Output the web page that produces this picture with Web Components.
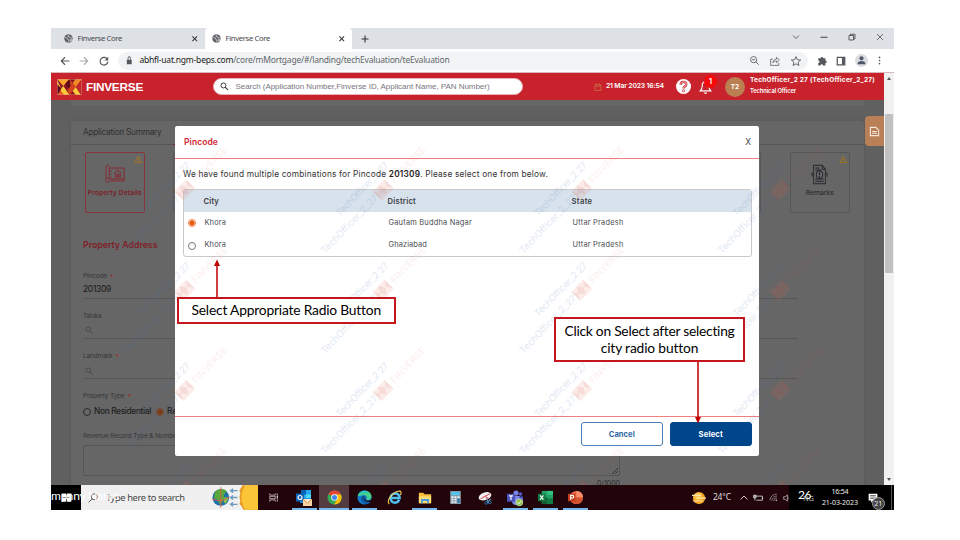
<!DOCTYPE html>
<html lang="en">
<head>
<meta charset="utf-8">
<title>Finverse Core</title>
<style>
body{margin:0;width:960px;height:540px;overflow:hidden;background:#fff;font-family:Inter,"Liberation Sans",sans-serif}
</style>
</head>
<body>
<slide-page></slide-page>
<script>
const G = {
  globe:`<circle cx="8" cy="8" r="7.500" fill="#5f6368"/><path d="M2 6l4 1 1 3 2 1-1 4M8 1.500l-1 2.500 3 1 1 2 4 0M11 10l3 0-2 3z" stroke="#dfe1e4" stroke-width="1.300" fill="none"/>`,
  x:`<path d="M3 3l10 10M13 3l-10 10" stroke="currentColor" stroke-width="2.200"/>`,
  xt:`<path d="M2 2l12 12M14 2l-12 12" stroke="currentColor" stroke-width="1.500"/>`,
  plus:`<path d="M8 1v14M1 8h14" stroke="currentColor" stroke-width="2.200"/>`,
  chev:`<path d="M2 5l6 6 6-6" stroke="currentColor" stroke-width="1.600" fill="none"/>`,
  up:`<path d="M1 11l7-7 7 7" stroke="currentColor" stroke-width="1.800" fill="none"/>`,
  min:`<path d="M1 8.500h14" stroke="currentColor" stroke-width="2"/>`,
  max:`<path d="M2 5h9v9H2zM4.500 5V2.500H14V12h-3" stroke="currentColor" stroke-width="1.700" fill="none"/>`,
  back:`<path d="M15 8H2M8 2L2 8l6 6" stroke="currentColor" stroke-width="1.800" fill="none"/>`,
  fwd:`<path d="M1 8h13M8 2l6 6-6 6" stroke="currentColor" stroke-width="1.800" fill="none"/>`,
  reload:`<path d="M13.500 5.500A6.200 6.200 0 1 0 14.200 9" stroke="currentColor" stroke-width="1.900" fill="none"/><path d="M14.800 1v6H9z" fill="currentColor"/>`,
  lock:`<path d="M2 7h12v8.500H2z" fill="currentColor"/><path d="M5 7V4.500a3 3 0 0 1 6 0V7" stroke="currentColor" stroke-width="2" fill="none"/>`,
  mag:`<circle cx="6.500" cy="6.500" r="4.700" stroke="currentColor" stroke-width="1.800" fill="none"/><path d="M10 10l5 5" stroke="currentColor" stroke-width="2"/>`,
  magL:`<circle cx="10" cy="6" r="4.800" stroke="currentColor" stroke-width="1.300" fill="none"/><path d="M6.500 9.500L1 15" stroke="currentColor" stroke-width="1.400"/>`,
  zoomout:`<circle cx="6.500" cy="6.500" r="5.500" stroke="currentColor" stroke-width="1.500" fill="none"/><path d="M10.500 10.500l5 5M4 6.500h5" stroke="currentColor" stroke-width="1.600"/>`,
  share:`<path d="M5 5H1v10h13V11M4.500 11c.5-4 3-6 6-6V2l4.500 4.500-4.500 4.200V8c-3 0-4.500 1-6 3z" stroke="currentColor" stroke-width="1.200" fill="none"/>`,
  star:`<path d="M8 1l2.100 5 5.400.4-4.100 3.500 1.300 5.300L8 12.400l-4.700 2.800 1.300-5.300L.5 6.400l5.400-.4z" stroke="currentColor" stroke-width="1.400" fill="none"/>`,
  ext:`<path d="M6 3.500a2 2 0 0 1 4 0h3.500v3.800a2 2 0 0 1 0 4V15h-4a2 2 0 0 0-4 0H2v-3.700a2 2 0 0 0 0-4V3.500z" fill="currentColor"/>`,
  panel:`<path d="M2 2h12v12H2z" stroke="currentColor" stroke-width="2" fill="none"/><path d="M9.500 2H14v12H9.500z" fill="currentColor"/>`,
  person:`<circle cx="8" cy="8" r="8" fill="#dadce0"/><circle cx="8" cy="5.200" r="2.500" fill="#4a5568"/><path d="M3 12.500c0-5 10-5 10 0z" fill="#4a5568"/>`,
  dots:`<circle cx="8" cy="2.500" r="1.500" fill="currentColor"/><circle cx="8" cy="8" r="1.500" fill="currentColor"/><circle cx="8" cy="13.500" r="1.500" fill="currentColor"/>`,
  cal:`<path d="M2 3.500h12V15H2zM2 6.500h12M5 1v3M11 1v3" stroke="#c97343" stroke-width="1.500" fill="none"/>`,
  help:`<circle cx="8" cy="8" r="8" fill="#fff"/><path d="M5 6.300C5 2 11.300 2.200 11 6c-.2 2-3 2-3 4" stroke="#c8232c" stroke-width="2.400" fill="none"/><path d="M5 6.300C5 2 11.300 2.200 11 6c-.2 2-3 2-3 4" stroke="#fff" stroke-width=".8" fill="none"/><circle cx="8" cy="12.600" r="1.300" stroke="#c8232c" stroke-width=".8" fill="#fff"/>`,
  bell:`<path d="M8 2c-3 0-4 2-4 4.500C4 10 3 11 1.500 12.500h13C13 11 12 10 12 6.500 12 4 11 2 8 2zM6.300 14.500c1 1 2.400 1 3.400 0" stroke="#fff" stroke-width="1.300" fill="none"/>`,
  note:`<path d="M2 2h8l4 4v8H2z" stroke="#f2e5db" stroke-width="1.600" fill="none"/><path d="M4.500 8h7M4.500 10.500h7" stroke="#f2e5db" stroke-width="1.500"/>`,
  warn:`<path d="M8 2l6.800 12H1.200z" stroke="#a8791b" stroke-width="1.500" fill="none"/><path d="M8 6v4.500M8 11.500v1.500" stroke="#a8791b" stroke-width="1.600"/>`,
  plot:`<path d="M4 3.200h11.300v8.700H4M4 3v8M1.500 11V2.200C1.500.5 4 .5 4 2.200M1.500 11v2.400c0 1.800 2.300 1.800 2.500.1h11.300v-1.600M1.500 11.500H4M8 7.200l2.500-2.500L13 7.200M8.700 6.700v3.600h3.700V6.700M10 10.300V8h1.200v2.300M5.500 5v1M5.500 7.500v1M5.500 10v1" stroke="#872530" stroke-width=".75" fill="none"/>`,
  remark:`<path d="M2.500 1h8L13.500 4v11h-11zM10.500 1v3h3M4 3h4M4 4.500h5M4 11.500h8M4 13.200h8" stroke="#26262b" stroke-width=".8" fill="none"/><circle cx="8" cy="8" r="3" stroke="#26262b" stroke-width=".9" fill="#666"/><path d="M8 6v2.500M8 9.200v.8M1 6.500v3M15 6.500v3" stroke="#26262b" stroke-width="1"/>`,
  win:`<path d="M1 2h6.500v5.600H1zM8.500 2H15v5.600H8.500zM1 8.500h6.500V14H1zM8.500 8.500H15V14H8.500z" fill="#fff"/>`,
  task:`<path d="M2.500 2v2.500h8V2M2.500 14v-2.500h8V14M2.500 6.300h8v3.400h-8zM13.500 2v12" stroke="#d8cfd1" stroke-width="1.100" fill="none"/><path d="M12.700 6h1.600v2h-1.600z" fill="#fff"/>`,
  outlook:`<path d="M5 0h10v9H5z" fill="#28a8ea"/><path d="M5 0h5v4.500H5z" fill="#0364b8"/><path d="M10 4.500h5V9h-5z" fill="#50d9ff"/><path d="M4 8h11v5H4z" fill="#1490df"/><rect y="3.500" width="8" height="8" fill="#0f64b5"/><circle cx="4" cy="7.500" r="2" stroke="#fff" stroke-width="1.200" fill="none"/><path d="M7 9h9v7H7z" fill="#f8d5a0"/><path d="M7 9l4.500 4L16 9" stroke="#d28a3f" stroke-width="1" fill="#fff0d5"/>`,
  chrome:`<circle cx="8" cy="8" r="7.500" fill="#34a853"/><path d="M8 8L1.500 4.200A7.500 7.500 0 0 1 14.800 4.700L8 4.700z" fill="#ea4335"/><path d="M8 4.700h6.800A7.500 7.500 0 0 1 7.600 15.500L11 9.500z" fill="#fbbc05"/><circle cx="8" cy="8" r="3.500" fill="#fff"/><circle cx="8" cy="8" r="2.700" fill="#4285f4"/>`,
  edge:`<circle cx="8" cy="8" r="7.500" fill="#127dcc"/><path d="M.8 6C3-1.500 15-1 15.500 7c0 3-3 4.500-5.500 3.500 2-2.500-.5-5.500-4-5C4 5.500 2 7 .8 6z" fill="#44cf8b"/><path d="M1 5.500C4-.5 11 0 12 3.500 8 2 3 3 1 5.500z" fill="#2bc3d2"/><path d="M6 7c-3 3 0 7 4 7.500 2.500 0 4.500-1.500 5.200-4C12 12.500 7.500 11 8 7z" fill="#22050a"/><path d="M6 7c-3 3 0 7.500 4 8 2 0 3.500-1 4.500-2.500-4 1-7.500-1.500-7-5z" fill="#0b57a6"/>`,
  ie:`<path d="M13 10.500C11 15 4 14.500 3.800 8.500 4 2.500 13 2 13.500 8.500H5" stroke="#4ec0ef" stroke-width="2.600" fill="none"/><path d="M2.500 15C-1 12 5 3 12 1.300c3.500-.7 3.500 2 2.300 4" stroke="#f3cf57" stroke-width="1.200" fill="none"/>`,
  folder:`<path d="M1 2h5l1.500 1.700H15V14H1z" fill="#f7bf3a"/><path d="M1 6h14v8H1z" fill="#ffdc73"/><path d="M3.500 14V9h9v5h-2v-2.500h-5V14z" fill="#4a9be0"/>`,
  calc:`<rect x="1.500" y="0" width="13" height="16" fill="#8a9cab"/><path d="M3 1.500h10V5H3z" fill="#48c8f4"/><path d="M3 6.500h2.500v2H3zM6.700 6.500h2.500v2H6.700zM3 9.500h2.500v2H3zM6.700 9.500h2.500v2H6.700zM3 12.500h2.500v2H3zM6.700 12.500h2.500v2H6.700zM10.500 6.500H13v2h-2.500z" fill="#f2f6f9"/><path d="M10.500 9.500H13v5h-2.500z" fill="#1b76b8"/>`,
  snip:`<ellipse cx="8" cy="6" rx="7.500" ry="4.300" transform="rotate(-20 8 6)" fill="#f2f2f2"/><path d="M8 6L14 3M8 6l-5 3M8 6l4 2.500" stroke="#d4535c" stroke-width="1.200"/><path d="M9.500 8l3 6M15 9l-5 4" stroke="#7893a8" stroke-width="1.200"/><circle cx="9.500" cy="13.500" r="1.600" stroke="#287bc0" fill="none"/><circle cx="13.500" cy="13" r="1.600" stroke="#287bc0" fill="none"/>`,
  teams:`<circle cx="9" cy="3" r="2.600" fill="#7b83eb"/><circle cx="13.500" cy="4" r="1.800" fill="#5059c9"/><path d="M5 6h8v5a4 4 0 0 1-8 0z" fill="#7b83eb"/><path d="M12 6.500h4v4a3 3 0 0 1-4 2z" fill="#5059c9"/><rect y="3.800" width="8" height="8" rx=".5" fill="#4b53bc"/><path d="M2 5.800h4M4 5.800V10" stroke="#fff" stroke-width="1.200"/><circle cx="12.300" cy="12.300" r="3.600" fill="#92c353" stroke="#fff" stroke-width=".4"/><path d="M10.500 12.300l1.400 1.400 2.300-2.600" stroke="#fff" fill="none"/>`,
  excel:`<path d="M4 1h12v14H4z" fill="#21a366"/><path d="M4 8h6v7H4z" fill="#185c37"/><path d="M10 1h6v4h-6z" fill="#33c481"/><path d="M10 9h6v6h-6z" fill="#107c41"/><rect y="4" width="8" height="8" fill="#107c41"/><path d="M2.200 5.800l3.600 4.400M5.800 5.800l-3.600 4.400" stroke="#fff" stroke-width="1.200"/>`,
  ppt:`<circle cx="9" cy="8" r="7" fill="#ed6c47"/><path d="M9 1a7 7 0 0 1 7 7H9z" fill="#ff8f6b"/><path d="M2 8h14a7 7 0 0 1-14 0z" fill="#d35230"/><rect y="4" width="8" height="8" fill="#c43e1c"/><path d="M2.800 10.500V5.700h1.800c2 0 2 2.800 0 2.800H2.800" stroke="#fff" stroke-width="1.200" fill="none"/>`,
  sun:`<circle cx="8" cy="8" r="7" fill="#f9a826"/><circle cx="7" cy="6" r="4" fill="#fdc94a"/><path d="M0 5h10M5 8.200h11M1 11.400h11" stroke="#fbe7b2" stroke-width="1.300"/>`,
  batt:`<path d="M5 5h10v6.500H5.500M15.500 7v2.500" stroke="#ddd" stroke-width="1.300" fill="none"/><path d="M1 3.500h4v4H1zM3 8v4" stroke="#ddd" stroke-width="1.300" fill="#999"/>`,
  wifi:`<path d="M1.500 13A12 12 0 0 1 14 2M5 13.500a8.500 8.500 0 0 1 9-8M8.500 14A5 5 0 0 1 14 9" stroke="#aaa" stroke-width="1.200" fill="none"/><circle cx="13" cy="13" r="1.300" fill="#ddd"/>`,
  spk:`<path d="M1 6h2.500L7 3v10l-3.500-3H1zM9 6c1 1 1 3 0 4M11 4.500c2 2 2 5 0 7M13 3c3 3 3 7 0 10" stroke="#ccc" stroke-width="1.100" fill="none"/>`,
  chat:`<path d="M1 1h14v11H8l-3 3.500V12H1z" fill="#fff"/><path d="M3.500 4h9M3.500 6.500h9M3.500 9h6" stroke="#222" stroke-width="1"/>`
};
class UiIcon extends HTMLElement{
  connectedCallback(){
    if(this.shadowRoot)return;
    const w=this.getAttribute('w')||10,h=this.getAttribute('h')||w;
    this.attachShadow({mode:'open'}).innerHTML=`<style>:host{display:block;flex:none;width:${w}px;height:${h}px}svg{display:block;overflow:visible}</style><svg width="${w}" height="${h}" viewBox="0 0 16 16" ${w!==h?'preserveAspectRatio="none"':''}>${G[this.getAttribute('name')]}</svg>`;
  }
}
/* Single line of text, tracked so that it fills the width given in "w". */
class FitText extends HTMLElement{
  connectedCallback(){
    if(this.shadowRoot)return;
    this.attachShadow({mode:'open'}).innerHTML=`<style>:host{display:inline-block;flex:none;width:max-content;white-space:nowrap;line-height:1.200}</style><slot></slot>`;
    const w=+this.getAttribute('w');
    if(w){const n=this.getBoundingClientRect().width;this.style.letterSpacing=((w-n)/this.textContent.length)+'px'}
  }
}
function comp(name,html){
  customElements.define(name,class extends HTMLElement{
    connectedCallback(){
      if(this.shadowRoot)return;
      this.attachShadow({mode:'open'}).innerHTML=typeof html==='function'?html(this):html;
    }
  });
}
customElements.define('ui-icon',UiIcon);

comp('finverse-logo',`<style>:host{display:block;flex:none;width:25px;height:16px}svg{display:block}</style>
<svg width="25" height="16" viewBox="0 0 24 16"  preserveAspectRatio="none"><path fill="#8d1420" d="M0 0h24v16H0z"/><path fill="#f7a52c" d="M0 0l6 7 6-7z"/><path fill="#e2571f" d="M0 16l6-8 6 8z"/><path fill="#f9c93a" d="M6 7l6 9H7L3 11zM0 1v4l4 4z"/><path fill="#5e0b17" d="M0 6l4 4-4 6zM8 5l4-5 4 5-4 6z"/><path fill="#d3431f" d="M12 0l6 8-6 8-2-5 3-4z"/><path fill="#f08a24" d="M24 0l-6 8-3-4 3-4z"/><path fill="#c4262a" d="M18 8l6-8v16z"/><path fill="#f9c93a" d="M18 8l5 8h-5l-3-4z"/><path d="M.3.300h23.400v15.400H.3z" fill="none" stroke="#d98b7d" stroke-width=".6"/></svg>`);

comp('browser-tab',`<style>:host{display:flex;align-items:center;box-sizing:border-box;width:147px;height:21px;padding:0 6px 0 7px;color:#45494d;font:7.700px "Noto Sans",sans-serif;border-radius:4px 4px 0 0}:host([active]){background:#fff}
fit-text{margin:0 auto 0 5px}ui-icon[name=x]{color:#333}</style><ui-icon name="globe" w="9"></ui-icon><fit-text w="44.500">Finverse Core</fit-text><ui-icon name="x" w="7.500"></ui-icon>`);

comp('browser-chrome',`<style>:host{display:block;color:#54585d}
.tabs{display:flex;background:#dee1e6;height:21px;align-items:center}
.tabs .one{width:148px;margin-left:5.500px}.win{margin-left:auto;display:flex;gap:20px;align-items:center;padding-right:10px;color:#444;height:18px;margin-bottom:3px}
.bar{display:flex;height:24px;align-items:center;background:#fff;border-bottom:1px solid #d9b9bb;box-sizing:border-box;padding-left:9px}
.url{display:flex;align-items:center;height:18px;width:690px;box-sizing:border-box;border-radius:9px;background:#f1f3f4;margin-left:9px;padding:0 7px 0 8px;font:8.500px "Noto Sans",sans-serif}
.url fit-text{margin:0 auto 0 7px;color:#63676c}.url b{font-weight:400;color:#222}.r{display:flex;gap:11px}
.ex{display:flex;gap:9px;align-items:center;margin-left:9px}</style>
<div class="tabs"><browser-tab class="one"></browser-tab><browser-tab active></browser-tab><ui-icon name="plus" w="8" style="margin-left:9px;color:#333"></ui-icon>
<div class="win"><ui-icon name="chev" w="8"></ui-icon><ui-icon name="min" w="8"></ui-icon><ui-icon name="max" w="8"></ui-icon><ui-icon name="xt" w="8"></ui-icon></div></div>
<div class="bar"><ui-icon name="back" w="10"></ui-icon><ui-icon name="fwd" w="10" style="margin-left:9px;color:#aaa"></ui-icon><ui-icon name="reload" w="10" style="margin-left:10px"></ui-icon>
<div class="url"><ui-icon name="lock" w="6.500" h="8.500"></ui-icon><fit-text w="310"><b>abhfl-uat.ngm-beps.com</b>/core/mMortgage/#/landing/techEvaluation/teEvaluation</fit-text><div class="r"><ui-icon name="zoomout" w="9"></ui-icon><ui-icon name="share" w="10"></ui-icon><ui-icon name="star" w="10"></ui-icon></div></div>
<div class="ex"><ui-icon name="ext" w="10"></ui-icon><ui-icon name="panel" w="10"></ui-icon><ui-icon name="person" w="13"></ui-icon><ui-icon name="dots" w="9" style="margin-left:-2px"></ui-icon></div></div>`);

comp('app-header',`<style>:host{display:flex;align-items:center;height:27px;background:#c8232c;color:#fff;padding-left:6px;box-sizing:border-box}
.brand{font:700 11.800px "Liberation Sans",sans-serif;margin-left:4px}
.search{display:flex;align-items:center;width:310px;height:16.500px;box-sizing:border-box;background:#fff;border:1px solid #e8b5b8;border-radius:9px;margin-left:70px;padding-left:6px;color:#333;font:8px "Liberation Sans",sans-serif}
.search fit-text{margin-left:7px;color:#77777c}
.date{font-weight:600;font-size:6.800px;margin-left:4px}
.bell{position:relative;margin-left:8px}.bell i{position:absolute;left:5px;top:-5px;width:13px;height:13px;border-radius:50%;background:#f50909;font:700 7px/13px Inter,sans-serif;text-align:center}
.av{width:20px;height:20px;border-radius:50%;background:#ba8052;margin-left:13px;font-size:6.500px;font-weight:700;line-height:20px;text-align:center;flex:none}
.who{display:flex;flex-direction:column;align-items:flex-start;gap:3px;margin:0 0 1px 5px;font-weight:700;font-size:6.500px}.who .s{font-weight:600;font-size:5.800px}</style>
<finverse-logo></finverse-logo><fit-text class="brand" w="57">FINVERSE</fit-text>
<div class="search"><ui-icon name="mag" w="8.500"></ui-icon><fit-text w="254">Search (Application Number,Finverse ID, Applicant Name, PAN Number)</fit-text></div>
<ui-icon name="cal" w="8" style="margin-left:71px"></ui-icon><fit-text class="date" w="58">21 Mar 2023 16:54</fit-text>
<ui-icon name="help" w="15" style="margin-left:12px"></ui-icon><div class="bell"><ui-icon name="bell" w="13" h="14"></ui-icon><i>1</i></div>
<div class="av">T2</div><div class="who"><fit-text w="125">TechOfficer_2 27 (TechOfficer_2_27)</fit-text><fit-text class="s" w="46">Technical Officer</fit-text></div>`);

comp('nav-tile',`<style>:host{display:flex;flex-direction:column;align-items:center;box-sizing:border-box;width:59.500px;height:60.500px;border:1px solid #565656;border-radius:2px;padding-top:2px;font-size:6.600px;font-weight:500;color:#2c2c30}
:host([on]){border-color:#88343b;color:#7c1d27;font-weight:600}.w{align-self:flex-end;margin-right:1px;height:8.500px}.i{height:21px;margin-bottom:5px}</style><div class="w"><slot name="warn"></slot></div><div class="i"><slot name="icon"></slot></div><slot></slot>`);

comp('form-field',e=>`<style>:host{display:block;height:40.300px;box-sizing:border-box;font-size:6.600px;color:#363638}
.l{height:10px;display:flex;align-items:center;gap:3px}.l em{color:#9c2525;font-style:normal}.v{display:flex;align-items:center;height:16px;border-bottom:1px solid #565656;font-size:8.300px;font-weight:500;color:#1f1f22;padding-top:1px;box-sizing:border-box;height:17px}ui-icon{color:#4a4a4a;margin-left:2px}</style>
<div class="l"><fit-text w="${e.getAttribute('lw')}">${e.getAttribute('label')}</fit-text>${e.hasAttribute('req')?'<em>*</em>':''}</div><div class="v">${e.hasAttribute('search')?'<ui-icon name="mag" w="8"></ui-icon>':''}<slot></slot></div>`);

comp('form-page',`<style>:host{display:block;height:385px;overflow:hidden;background:#606060;padding:0 20px;box-sizing:border-box}
.prev{height:6px;background:#666}.card{height:370px;margin-top:15px;background:#666;border-radius:4px 4px 0 0;box-shadow:0 0 3px #555}
.tabs{position:relative;display:flex;height:24px;box-sizing:border-box;padding-top:1px;align-items:center;border-bottom:1px solid #555;padding-left:12px;font-size:8.300px;color:#303033}.tabs i{position:absolute;left:102px;bottom:-1px;width:60px;height:1px;background:#8c1f29}
.tiles{display:grid;grid-template-columns:59.500px 500px 59.500px 59.500px;column-gap:28.700px;padding:7px 0 0 14px}
h3{margin:25.500px 0 0 12px;height:14px;font-size:8.800px;font-weight:600;color:#811d27;display:flex;align-items:center}
.f{padding:19.500px 66px 0 12px}
.pt{display:flex;gap:3px;align-items:center;font-size:8.300px;font-weight:500;color:#1e1e20;height:14px;margin-top:2.500px}
.lab{height:10px;display:flex;align-items:center;gap:3px;font-size:6.600px;color:#363638}.lab em{color:#9c2525;font-style:normal}
.rad{width:8px;height:8px;box-sizing:border-box;border:1px solid #2a2a2a;border-radius:50%;background:#666}.rad.on{border-color:#7b4423;background:radial-gradient(#7b3b17 0 2.300px,#666 2.900px);margin-left:2px}
.ta{display:flex;align-items:flex-end;justify-content:flex-end;width:537px;height:31px;box-sizing:border-box;border:1px solid #555;border-radius:2px;margin-top:3px}
.cnt{width:537px;text-align:right;font-size:7px;line-height:9px;margin-top:3.500px;color:#2a2a2a}</style>
<div class="prev"></div><div class="card"><div class="tabs"><fit-text w="78.500">Application Summary</fit-text><i></i></div>
<div class="tiles"><nav-tile on><ui-icon slot="warn" name="warn" w="8.500"></ui-icon><ui-icon slot="icon" name="plot" w="21" h="20"></ui-icon><fit-text w="54">Property Details</fit-text></nav-tile><nav-tile></nav-tile><nav-tile></nav-tile><nav-tile><ui-icon slot="warn" name="warn" w="8.500"></ui-icon><ui-icon slot="icon" name="remark" w="17" h="21"></ui-icon><fit-text w="28">Remarks</fit-text></nav-tile></div>
<h3><fit-text w="74.500">Property Address</fit-text></h3>
<div class="f"><form-field label="Pincode" lw="24" req><fit-text w="28">201309</fit-text></form-field><form-field label="Taluka" lw="18.500" search></form-field><form-field label="Landmark" lw="29.500" req search></form-field>
<div class="lab"><fit-text w="41.500">Property Type</fit-text><em>*</em></div><div class="pt"><span class="rad"></span><fit-text w="57">Non Residential</fit-text><span class="rad on"></span><fit-text w="45">Residential</fit-text></div>
<div class="lab" style="margin-top:13px"><fit-text w="96">Revenue Record Type &amp; Number</fit-text></div>
<div class="ta"><svg width="8" height="8"><path d="M1 7l6-6M4 7l3-3" stroke="#333"/></svg></div><div class="cnt">0/1000</div></div></div>`);

comp('water-marks',()=>{
  let s='';
  for(let r=0;r<4;r++)for(let c=0;c<4;c++){
    const x=133+c*198.500,y=90+r*100.300;
    s+=`<g transform="translate(${x} ${y}) rotate(-46)"><text x="-86" y="3" textLength="77" class="b">TechOfficer_2_27</text><text x="-49" y="-12" textLength="71" class="b">TechOfficer_2 27</text><path d="M-8-6H9V7H-8z" fill="#e8735a" opacity=".13"/><path d="M-8-6l4 6-4 6zM0-6l4 6-4 6-4-6zM9-6L5 0l4 6z" fill="#c0392b" opacity=".09"/><text x="13" y="4" textLength="46" class="r">FINVERSE</text></g>`;
  }
  return `<style>:host{display:block;position:absolute;inset:0;overflow:hidden;pointer-events:none}text{font:9.500px Inter,sans-serif}.b{fill:#4472b8;opacity:.16}.r{fill:#dd4444;opacity:.09}</style><svg width="833" height="385">${s}</svg>`;
});

comp('radio-dot',`<style>:host{display:block;box-sizing:border-box;width:8px;height:8px;border:1px solid #777;border-radius:50%;margin-left:4px}:host([on]){border-color:#ef7a3c;background:radial-gradient(circle,#e8590c 0 2.300px,#fff 2.900px)}</style>`);

comp('city-table',`<style>:host{display:block;border:1px solid #c9c9cb;border-radius:3px;overflow:hidden;height:68px;box-sizing:border-box;font-size:7.400px;color:#4a4b50}
.row{display:grid;grid-template-columns:20.500px 184px 184px 1fr;height:22.300px;align-items:center}.row.h{background:#d8e2ec;font-weight:600;color:#3c4046;font-size:7.600px}.h fit-text{margin-left:-1px}</style>
<div class="row h"><span></span><fit-text w="15.500">City</fit-text><fit-text w="28.500">District</fit-text><fit-text w="21">State</fit-text></div>
<div class="row"><radio-dot on></radio-dot><fit-text w="21.500">Khora</fit-text><fit-text w="83.500">Gautam Buddha Nagar</fit-text><fit-text w="51">Uttar Pradesh</fit-text></div>
<div class="row"><radio-dot></radio-dot><fit-text w="21.500">Khora</fit-text><fit-text w="38.500">Ghaziabad</fit-text><fit-text w="51">Uttar Pradesh</fit-text></div>`);

comp('ui-button',`<style>:host{display:flex;align-items:center;justify-content:center;box-sizing:border-box;width:81.500px;height:23.500px;border:1px solid #4c7fb5;border-radius:3px;background:#fff;color:#2f66a2;font-size:7.600px;font-weight:700;padding-top:1px}:host([primary]){background:#00468b;border-color:#00468b;color:#fff}</style><slot></slot>`);

comp('pincode-dialog',`<style>:host{display:flex;flex-direction:column;position:absolute;left:124px;top:25.500px;width:584px;height:330.500px;background:#fff;border-radius:2px;box-sizing:border-box}
.hd{display:flex;justify-content:space-between;align-items:center;height:33.500px;box-sizing:border-box;border-bottom:1px solid #ee7f83;padding:0 8px 0 9px;color:#cf2733;font-size:8.500px;font-weight:600}.hd span{color:#444;font:8.500px Inter,sans-serif}
.bd{flex:1;padding:11px 7px 0 8px;color:#333;font-size:8.300px}.msg{height:19px;display:flex;align-items:flex-start}
.ft{height:40px;box-sizing:border-box;border-top:1px solid #ee7f83}</style>
<div class="hd"><fit-text w="34">Pincode</fit-text><span>X</span></div>
<div class="bd"><div class="msg"><fit-text w="365">We have found multiple combinations for Pincode <b style="font-weight:600;color:#222">201309</b>. Please select one from below.</fit-text></div><city-table></city-table></div><div class="ft"></div>`);

comp('scroll-bar',`<style>:host{display:flex;flex-direction:column;justify-content:space-between;width:10px;height:412px;background:#f1f1f1;align-items:center}
i{border:2.500px solid transparent}.u{border-bottom:3px solid #555;margin-top:2px}.d{border-top:3px solid #555;margin-bottom:2px}.t{width:8px;height:159px;background:#c1c1c1;margin-top:33.500px;margin-bottom:auto}</style><i class="u"></i><div class="t"></div><i class="d"></i>`);

const apps=[['outlook',16,1],['chrome',15,2],['edge',15,1],['ie',15,0],['folder',14,1],['calc',13,0],['snip',14,0],['teams',16,1],['excel',15,1],['ppt',15,1]];
comp('task-bar',`<style>:host{display:flex;height:25px;background:#22050a;color:#fff;font-family:"Noto Sans",sans-serif;overflow:hidden}
.st{width:30px;background:#000;display:flex;align-items:center;justify-content:center}
.se{width:177px;background:#f0f0f0;display:flex;align-items:center;color:#444;font-size:9.300px}.se ui-icon{margin-left:7px}.se fit-text{margin:0 8px 0 8px}
.tv{width:31px;display:flex;align-items:center;justify-content:center}
.app{width:30.200px;display:flex;align-items:center;justify-content:center;box-sizing:border-box;background:linear-gradient(#76b9ed,#76b9ed) center bottom/0 2px no-repeat}.r1{background-size:25px 2px}.r2{background-size:30px 2px;background-color:#543b40}
.sun{margin-left:101px;display:flex;align-items:center;font-size:8.500px;gap:7px;color:#ddd}
.tr{display:flex;align-items:center;gap:5.500px;margin-left:9px;color:#ddd}
.cl{background:#000;flex:1;display:flex;align-items:center;color:#eee;font-size:7px;margin-left:-4px}
.cl .k{display:flex;flex-direction:column;align-items:center;gap:3px;margin-left:32.500px}
.n{position:relative;margin-left:10px}.n i{position:absolute;left:4px;top:4px;width:11px;height:11px;border-radius:50%;background:#444;font:7px/11px "Noto Sans",sans-serif;text-align:center;border:.5px solid #999}.e{margin-left:auto;margin-right:2px;width:1px;height:25px;background:#555}</style>
<div class="st"><ui-icon name="win" w="11"></ui-icon></div>
<div class="se"><ui-icon name="magL" w="10"></ui-icon><fit-text w="78.500">Type here to search</fit-text>
<svg width="47" height="25" viewBox="0 0 47 25" style="margin-left:19.500px"><circle cx="9" cy="12.500" r="8.500" fill="#1f6fa8"/><path d="M3 7c3-4 9-4 12-1l-3 4 1 4-5 6-2-5-4-2z" fill="#58a83c"/><path d="M13 12l4 1-3 6-2-2z" fill="#8cc24a"/><path d="M9 2v21M0 14q9 4 18-2" stroke="#d95f4f" fill="none"/><path d="M19 5.500h7M19 12.500h7M19 19.500h7M21.500 3.500l-2.500 2 2.500 2M21.500 10.500l-2.500 2 2.500 2M21.500 17.500l-2.500 2 2.500 2" stroke="#6d9cc0" stroke-width="1.400" fill="none"/><path d="M47 0H31q-1 3-3 5l1 3-1 4 1 4-1 3q3 3 4 6h15z" fill="#e79a22"/><path d="M47 0H34Q26 12 34 25h13z" fill="#fac536"/></svg></div>
<div class="tv"><ui-icon name="task" w="11"></ui-icon></div>
${apps.map(a=>`<div class="app r${a[2]}"><ui-icon name="${a[0]}" w="${a[1]}"></ui-icon></div>`).join('')}
<div class="sun"><ui-icon name="sun" w="14"></ui-icon><fit-text w="18">24°C</fit-text></div>
<div class="tr"><ui-icon name="up" w="8"></ui-icon><ui-icon name="batt" w="10"></ui-icon><ui-icon name="wifi" w="9"></ui-icon><ui-icon name="spk" w="10"></ui-icon></div>
<div class="cl"><div class="k"><fit-text w="17">16:54</fit-text><fit-text w="36">21-03-2023</fit-text></div><div class="n"><ui-icon name="chat" w="10"></ui-icon><i>21</i></div><div class="e"></div></div>`);

comp('call-out',`<style>:host{display:flex;align-items:center;justify-content:center;flex-direction:column;position:absolute;box-sizing:border-box;border:2px solid #c4161c;background:#fff;font-family:Lato,sans-serif;font-size:13.800px;color:#000}</style><slot></slot>`);

comp('slide-page',`<style>:host{display:block;position:relative;width:960px;height:540px;box-sizing:border-box;padding:28px 66px 30px 51px}
.row{display:flex}.view{position:relative;width:833px}.stage{position:relative}.side{position:absolute;right:0;top:16px;width:19px;height:30px;background:#b97f57;border-radius:4px 0 0 4px;display:flex;align-items:center;justify-content:center}
.bt{position:absolute;display:flex;gap:7.500px;left:530px;top:322px}.arr{position:absolute;left:0;top:0}.foot{position:absolute;color:#fff;font:12px Lato,sans-serif}
.c1{left:177px;top:297px;width:218.500px;height:27px}.c2{left:554px;top:317px;width:191px;height:45px}.eng{position:absolute;left:803px;top:493px;font:7.500px "Noto Sans",sans-serif;color:#bbb}</style>
<browser-chrome></browser-chrome>
<div class="row"><div class="view"><app-header></app-header><div class="stage"><form-page></form-page><pincode-dialog></pincode-dialog><water-marks></water-marks><div class="side"><ui-icon name="note" w="11"></ui-icon></div><div class="bt"><ui-button><fit-text w="26">Cancel</fit-text></ui-button><ui-button primary><fit-text w="24.500">Select</fit-text></ui-button></div></div></div><scroll-bar></scroll-bar></div>
<task-bar></task-bar>
<svg class="arr" width="960" height="540"><path d="M217 297V265M698 361v57" stroke="#c00000" stroke-width="1.500"/><path d="M214 266l3-6.500 3 6.500zM695 417l3 6.500 3-6.500z" fill="#c00000"/></svg>
<call-out class="c1"><fit-text w="189">Select Appropriate Radio Button</fit-text></call-out>
<call-out class="c2"><fit-text w="170">Click on Select after selecting</fit-text><fit-text w="97">city radio button</fit-text></call-out>
<fit-text class="foot" style="left:51px;top:488px" w="68">mpany Name</fit-text><fit-text class="eng" w="11">NG</fit-text><fit-text class="foot" style="left:798px;top:487px" w="13">26</fit-text>`);
customElements.define('fit-text',FitText);
</script>
</body>
</html>
